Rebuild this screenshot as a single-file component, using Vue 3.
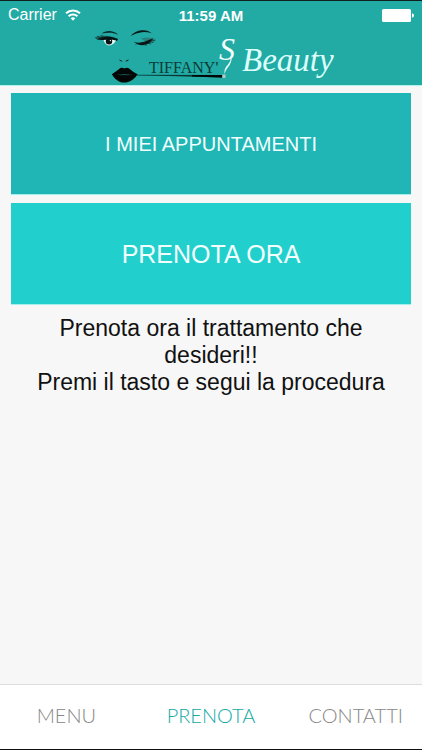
<template>
  <div class="app">
    <header class="header">
      <div class="status-bar">
        <div class="status-left">
          <span>Carrier</span>
          <svg class="wifi" viewBox="0 0 16 12" width="16" height="12" aria-hidden="true">
            <path d="M8 11.800 5.700 9.300a3.400 3.400 0 0 1 4.600 0z" fill="#fff" />
            <path d="M3.600 7.200a6.400 6.400 0 0 1 8.800 0M1 4.300a10.200 10.200 0 0 1 14 0" fill="none" stroke="#fff" stroke-width="2" />
          </svg>
        </div>
        <span class="status-time">11:59 AM</span>
        <div class="status-right">
          <svg viewBox="0 0 32 13" width="32" height="13" aria-hidden="true">
            <rect x="0" y="0" width="29" height="13" rx="1.5" fill="#fff" />
            <path d="M30 4.200q2 .6 2 2.300t-2 2.300z" fill="#fff" />
          </svg>
        </div>
      </div>

      <svg class="logo" viewBox="89 29 244 56" width="244" height="56" role="img" aria-label="Tiffany's Beauty">
        <!-- left eye -->
        <path d="M101.500 33.600c4-3.600 12-3.800 16.700 1.200-5-2.600-10.500-2.600-16.700-1.200z" fill="#0b2b2a" />
        <path d="M94.500 37.400q3-2 8-1.900 8 0 15.500 3.300l-1.500 1.800q-5-2-9-1.600-5 .4-8 .7z" fill="#17504d" opacity=".7" />
        <path d="M96.500 39.200q5-3 11.500-2.600 5 .4 10 2.500l-1 1.800q-5-1.600-9-1.100-5 .8-11.500-.6z" fill="#061514" />
        <path d="M103.500 40q1.500 5 5.500 5.400 4.500-.3 7-5-6-1.500-12.500-.4z" fill="#e9f7f6" />
        <circle cx="109" cy="41.200" r="3.200" fill="#081413" />
        <circle cx="110.400" cy="40.600" r=".7" fill="#fff" />
        <path d="M95.500 38l5 1.800M97 36.400l5 2M101 35.200l3 2.200" stroke="#14413f" stroke-width=".7" />
        <!-- winking eye -->
        <path d="M130.500 36q4.500-5 11.300-5.700 6-.5 9.900 3-5-1.600-10-1.100-5.400.8-11.200 3.800z" fill="#071a19" />
        <path d="M141 38.400q8-2.200 15 1.100-3 2.600-7 3.900z" fill="#2b7773" opacity=".8" />
        <path d="M133.800 41.700q5 1.800 10.400.1 4.800-2 9-3.600-2 4.800-7.400 6.600-6.500 1.700-12-3.100z" fill="#081615" />
        <path d="M148 43.300l3.200.6M150.500 42l3.200.5M151.800 40.500l3.500.2M144 44.500l2.500 1M137 43.500l-1.500 1.200" stroke="#14413f" stroke-width=".8" />
        <!-- nose -->
        <path d="M119 59.700q2.200-.2 3.600 1.700-2.600.3-3.600-1.700zM125.300 61.400q1.300-2.200 3.700-1.600-1 1.800-3.700 1.600z" fill="#08201f" />
        <!-- lips -->
        <path d="M111.800 74.200q4-2.200 8.600-6.100 2-1 4.100.5 2.200-1.500 4.300-.4 4 3.800 8.900 6-4.500 6.600-9.600 7.700-4 1-8 0-4.600-1.700-8.300-7.700z" fill="#020606" />
        <path d="M114.500 74.500q5 .5 10-.3 5 .8 10 .3-5 1-10 .6-5 .4-10-.6z" fill="#1b6d69" />
        <!-- cigarette holder -->
        <path d="M136 74.700 222 75v2.600L168 76.100l-32-.7z" fill="#0a3836" />
        <path d="M192 75h30v2.600l-30-1z" fill="#020606" />
        <path d="M222.500 74.500h3v3.400h-3z" fill="#b6c9c7" />
        <text class="logo-name" x="149" y="73">TIFFANY'</text>
        <!-- smoke -->
        <path d="M230.500 56q1 4.500-2.500 8.500-4 3.500-3.600 9.500 1-3.800 3.600-6.800 4-4.700 3.600-10.200z" fill="#e9fbfa" />
        <text class="logo-s" x="219" y="60">S</text>
        <text class="logo-beauty" x="242" y="71">Beauty</text>
      </svg>
    </header>

    <main class="content">
      <button type="button" class="action action--list">I MIEI APPUNTAMENTI</button>
      <button type="button" class="action action--book">PRENOTA ORA</button>
      <p class="hint">
        Prenota ora il trattamento che desideri!!<br />
        Premi il tasto e segui la procedura
      </p>
    </main>

    <nav class="tab-bar">
      <a
        v-for="tab in tabs"
        :key="tab.id"
        :href="`#${tab.id}`"
        class="tab"
        :class="{ 'is-active': activeTab === tab.id }"
        @click.prevent="activeTab = tab.id"
      >{{ tab.label }}</a>
    </nav>
  </div>
</template>

<script setup>
import { ref } from 'vue'

const tabs = [
  { id: 'menu', label: 'MENU' },
  { id: 'prenota', label: 'PRENOTA' },
  { id: 'contatti', label: 'CONTATTI' }
]

const activeTab = ref('prenota')
</script>

<style>
body {
  background: #f7f7f7;
}
</style>

<style scoped>
.app {
  box-sizing: border-box;
  min-height: 100vh;
  display: flex;
  flex-direction: column;
  border-top: 1px solid #10201f;
  border-bottom: 1px solid #111;
  background: #f7f7f7;
  font-family: "Liberation Sans", Arial, sans-serif;
}

.header {
  display: flex;
  flex-direction: column;
  align-items: center;
  background: #22aba4;
  border-bottom: 1px solid #b5efee;
}

.status-bar {
  box-sizing: border-box;
  width: 100%;
  height: 28px;
  padding: 0 8px;
  display: grid;
  grid-template-columns: 1fr auto 1fr;
  align-items: center;
  color: #fff;
  font-size: 16px;
}

.status-left {
  display: flex;
  align-items: center;
  gap: 8px;
}

.status-time {
  font-size: 15px;
  font-weight: bold;
}

.status-right {
  display: flex;
  justify-content: flex-end;
}

.logo {
  display: block;
  overflow: visible;
}

.logo-name {
  font-family: "Liberation Serif", "Times New Roman", serif;
  font-size: 16px;
  fill: #0b3b39;
}

.logo-s {
  font-family: "Liberation Serif", "Times New Roman", serif;
  font-size: 32px;
  font-style: italic;
  fill: #f2fffe;
}

.logo-beauty {
  font-family: "Liberation Serif", "Times New Roman", serif;
  font-size: 33px;
  font-style: italic;
  fill: #dcfffc;
}

.content {
  flex: 1;
  display: flex;
  flex-direction: column;
  gap: 8px;
  padding: 7px 11px;
}

.action {
  height: 102px;
  padding: 2px 0 0;
  border: none;
  border-bottom: 1px solid #a5eeec;
  color: #f2fffe;
  font-family: inherit;
  cursor: pointer;
}

.action--list {
  background: #1fb6b5;
  font-size: 20px;
}

.action--book {
  background: #21d0cc;
  font-size: 25px;
}

.hint {
  margin: 0;
  padding: 2px 20px;
  color: #111;
  font-size: 23px;
  line-height: 27px;
  text-align: center;
}

.tab-bar {
  box-sizing: border-box;
  display: flex;
  gap: 12px;
  height: 65px;
  padding-bottom: 5px;
  border-top: 1px solid #dcdcdc;
  background: #fff;
}

.tab {
  flex: 1 1 0;
  display: flex;
  align-items: center;
  justify-content: center;
  color: #888;
  font-family: Lato, sans-serif;
  font-size: 20px;
  font-weight: 300;
  text-decoration: none;
}

.tab.is-active {
  color: #12aaa5;
}
</style>
